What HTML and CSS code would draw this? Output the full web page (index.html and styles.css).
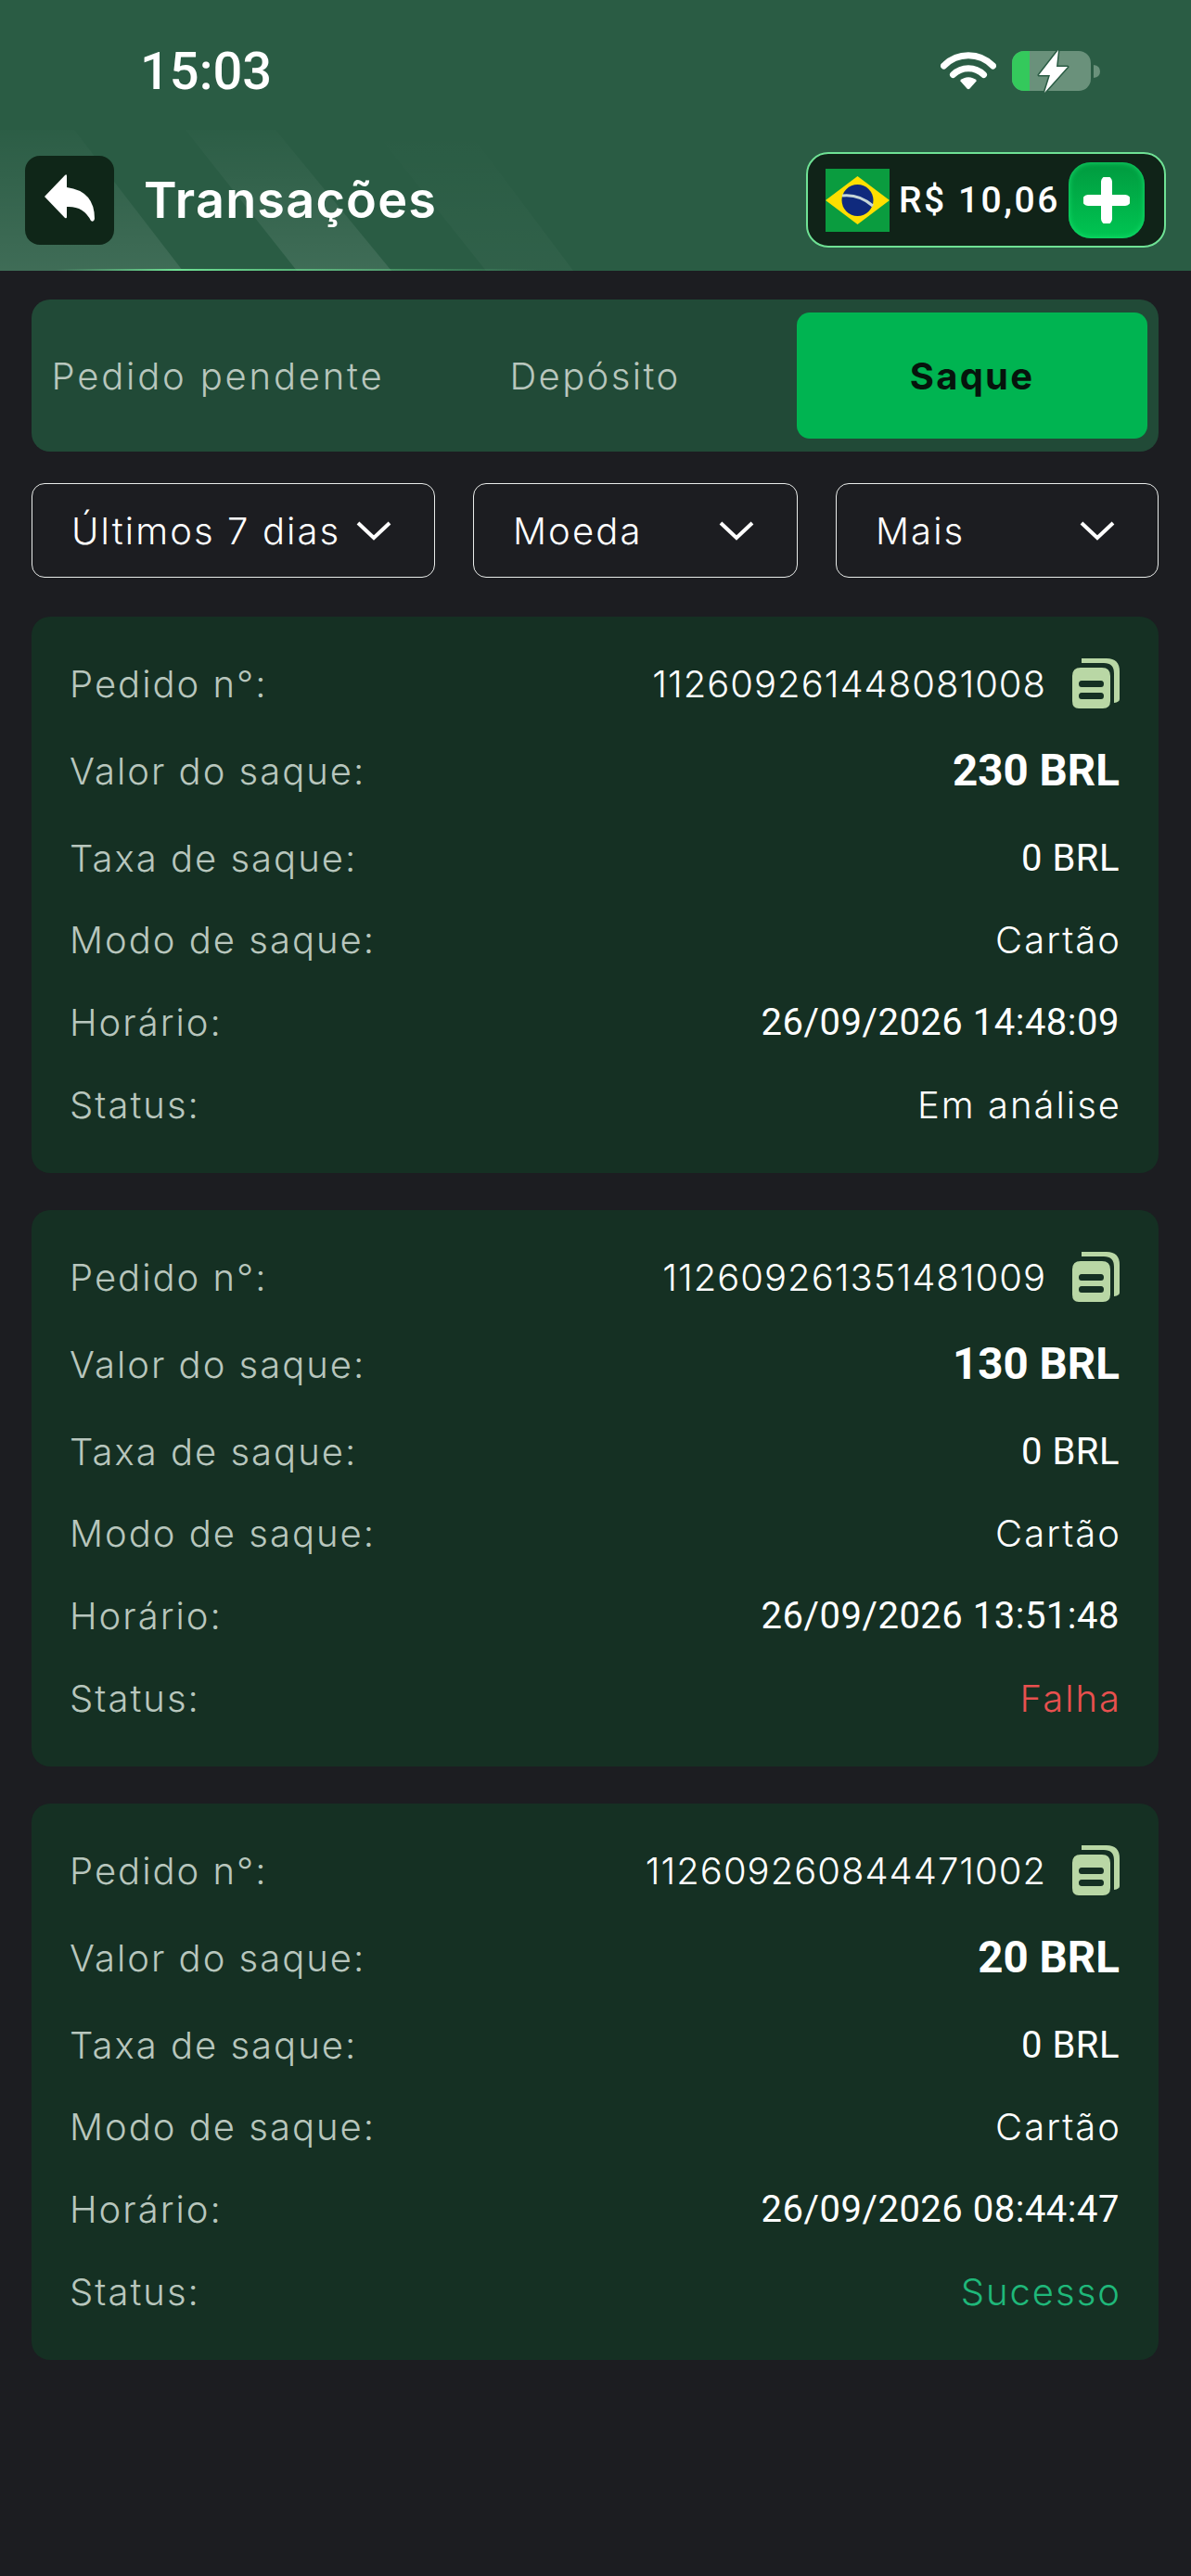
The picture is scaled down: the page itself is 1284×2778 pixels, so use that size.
FILE: index.html
```html
<!DOCTYPE html>
<html lang="pt-BR">
<head>
    <meta charset="UTF-8">
    <meta name="viewport" content="width=device-width, initial-scale=1.0">
    <title>Transações</title>
    <link rel="stylesheet" href="styles.css">
</head>
<body>

    <header class="topo">
        <svg class="listras" viewBox="0 0 640 152" preserveAspectRatio="none" aria-hidden="true">
            <defs>
                <linearGradient id="brilho" x1="0" y1="0" x2="0" y2="1">
                    <stop offset="0" stop-color="#fff" stop-opacity="0.01"/>
                    <stop offset="1" stop-color="#fff" stop-opacity="0.1"/>
                </linearGradient>
                <linearGradient id="brilhoFraco" x1="0" y1="0" x2="0" y2="1">
                    <stop offset="0" stop-color="#fff" stop-opacity="0"/>
                    <stop offset="1" stop-color="#fff" stop-opacity="0.03"/>
                </linearGradient>
            </defs>
            <polygon points="0,0 80,0 197,152 0,152" fill="url(#brilho)"/>
            <polygon points="200,0 297,0 422,152 320,152" fill="url(#brilho)"/>
            <polygon points="403,0 504,0 618,152 524,152" fill="url(#brilhoFraco)"/>
        </svg>

        <div class="status-bar">
            <span class="hora">15:03</span>
            <div class="status-icones">
                <svg class="wifi" width="60" height="44" viewBox="0 0 60 44" aria-hidden="true">
                    <path d="M3.5 18 C18 3 42 3 56.5 18" fill="none" stroke="#fff" stroke-width="7" stroke-linecap="round"/>
                    <path d="M13.5 27.5 C23 18.5 37 18.5 46.5 27.5" fill="none" stroke="#fff" stroke-width="7" stroke-linecap="round"/>
                    <path d="M21 34 C26 29 34 29 39 34 L31.500 42.500 Q30 44 28.500 42.500 Z" fill="#fff"/>
                </svg>
                <svg class="bateria" width="96" height="48" viewBox="0 0 96 48" aria-hidden="true">
                    <rect x="0" y="2" width="85" height="43" rx="13" fill="#6a917b"/>
                    <path d="M13 2 H19 V45 H13 A13 13 0 0 1 0 32 V15 A13 13 0 0 1 13 2 Z" fill="#34c95c"/>
                    <path d="M88 17 Q95 18 95 24 Q95 30 88 31 Z" fill="#6a917b"/>
                    <path d="M50 1 L29 28 H41 L35 47 L60 19 H48 Z" fill="#fff" stroke="#2a5c44" stroke-width="3" stroke-linejoin="round" paint-order="stroke"/>
                </svg>
            </div>
        </div>

        <div class="nav">
            <div class="nav-esq">
                <button class="voltar" type="button" aria-label="Voltar">
                    <svg width="96" height="96" viewBox="0 0 96 96" aria-hidden="true">
                        <path d="M43 21 L21 44 L43 67 Q45 68 45 66 V55 Q63 54 71 70 Q74 72 75 68 Q75 38 45 34 V22 Q45 19 43 21 Z" fill="#fff"/>
                    </svg>
                </button>
                <h1 class="titulo">Transações</h1>
            </div>
            <div class="saldo">
                <svg class="bandeira" width="69" height="68" viewBox="0 0 69 68" aria-hidden="true">
                    <rect width="69" height="68" fill="#0a9c3f"/>
                    <polygon points="34.500,8 69,34 34.500,60 0,34" fill="#fedf00"/>
                    <circle cx="34.500" cy="34" r="17" fill="#0f2a7d"/>
                    <path d="M18 29 Q36 27 51 40" fill="none" stroke="#c6d6d8" stroke-width="3"/>
                </svg>
                <span class="saldo-valor">R$ 10,06</span>
                <button class="somar" type="button" aria-label="Adicionar">
                    <svg width="50" height="50" viewBox="0 0 50 50" aria-hidden="true">
                        <path d="M25 5 V45 M5 25 H45" stroke="#fff" stroke-width="12" stroke-linecap="round"/>
                    </svg>
                </button>
            </div>
        </div>
    </header>

    <main class="conteudo">
        <div class="abas">
            <div class="aba aba-longa">Pedido pendente</div>
            <div class="aba">Depósito</div>
            <div class="aba aba-ativa">Saque</div>
        </div>

        <div class="filtros">
            <div class="filtro"><span>Últimos 7 dias</span><svg width="38" height="22" viewBox="0 0 38 22" aria-hidden="true"><path d="M2 3 L19 19 L36 3" fill="none" stroke="#fff" stroke-width="4"/></svg></div>
            <div class="filtro"><span>Moeda</span><svg width="38" height="22" viewBox="0 0 38 22" aria-hidden="true"><path d="M2 3 L19 19 L36 3" fill="none" stroke="#fff" stroke-width="4"/></svg></div>
            <div class="filtro"><span>Mais</span><svg width="38" height="22" viewBox="0 0 38 22" aria-hidden="true"><path d="M2 3 L19 19 L36 3" fill="none" stroke="#fff" stroke-width="4"/></svg></div>
        </div>

        <section class="cartao">
            <div class="linha linha-alta"><span class="rotulo">Pedido n°:</span><span class="valor-id">112609261448081008<svg class="copiar" width="52" height="54" viewBox="0 0 52 54" aria-hidden="true"><path d="M11 0 H38 Q52 0 52 14 V44 Q52 47 46 48 V16 Q46 5 35 5 H11 Q11 0 11 0 Z" fill="#b9d7a5"/><path fill-rule="evenodd" d="M10 10 H33 Q42 10 42 19 V46 Q42 54 34 54 H8 Q1 54 1 46 V19 Q1 10 10 10 Z M11 24 Q8 24 8 27.500 Q8 31 11 31 H32 Q35 31 35 27.500 Q35 24 32 24 Z M11 37 Q8 37 8 40.500 Q8 44 11 44 H32 Q35 44 35 40.500 Q35 37 32 37 Z" fill="#b9d7a5"/></svg></span></div>
            <div class="linha linha-alta"><span class="rotulo">Valor do saque:</span><span class="valor-forte">230 BRL</span></div>
            <div class="linha linha-alta linha-taxa"><span class="rotulo">Taxa de saque:</span><span class="valor-num">0 BRL</span></div>
            <div class="linha"><span class="rotulo">Modo de saque:</span><span class="valor">Cartão</span></div>
            <div class="linha"><span class="rotulo">Horário:</span><span class="valor-num">26/09/2026 14:48:09</span></div>
            <div class="linha"><span class="rotulo">Status:</span><span class="valor">Em análise</span></div>
        </section>

        <section class="cartao">
            <div class="linha linha-alta"><span class="rotulo">Pedido n°:</span><span class="valor-id">112609261351481009<svg class="copiar" width="52" height="54" viewBox="0 0 52 54" aria-hidden="true"><path d="M11 0 H38 Q52 0 52 14 V44 Q52 47 46 48 V16 Q46 5 35 5 H11 Q11 0 11 0 Z" fill="#b9d7a5"/><path fill-rule="evenodd" d="M10 10 H33 Q42 10 42 19 V46 Q42 54 34 54 H8 Q1 54 1 46 V19 Q1 10 10 10 Z M11 24 Q8 24 8 27.500 Q8 31 11 31 H32 Q35 31 35 27.500 Q35 24 32 24 Z M11 37 Q8 37 8 40.500 Q8 44 11 44 H32 Q35 44 35 40.500 Q35 37 32 37 Z" fill="#b9d7a5"/></svg></span></div>
            <div class="linha linha-alta"><span class="rotulo">Valor do saque:</span><span class="valor-forte">130 BRL</span></div>
            <div class="linha linha-alta linha-taxa"><span class="rotulo">Taxa de saque:</span><span class="valor-num">0 BRL</span></div>
            <div class="linha"><span class="rotulo">Modo de saque:</span><span class="valor">Cartão</span></div>
            <div class="linha"><span class="rotulo">Horário:</span><span class="valor-num">26/09/2026 13:51:48</span></div>
            <div class="linha"><span class="rotulo">Status:</span><span class="valor status-falha">Falha</span></div>
        </section>

        <section class="cartao">
            <div class="linha linha-alta"><span class="rotulo">Pedido n°:</span><span class="valor-id">112609260844471002<svg class="copiar" width="52" height="54" viewBox="0 0 52 54" aria-hidden="true"><path d="M11 0 H38 Q52 0 52 14 V44 Q52 47 46 48 V16 Q46 5 35 5 H11 Q11 0 11 0 Z" fill="#b9d7a5"/><path fill-rule="evenodd" d="M10 10 H33 Q42 10 42 19 V46 Q42 54 34 54 H8 Q1 54 1 46 V19 Q1 10 10 10 Z M11 24 Q8 24 8 27.500 Q8 31 11 31 H32 Q35 31 35 27.500 Q35 24 32 24 Z M11 37 Q8 37 8 40.500 Q8 44 11 44 H32 Q35 44 35 40.500 Q35 37 32 37 Z" fill="#b9d7a5"/></svg></span></div>
            <div class="linha linha-alta"><span class="rotulo">Valor do saque:</span><span class="valor-forte">20 BRL</span></div>
            <div class="linha linha-alta linha-taxa"><span class="rotulo">Taxa de saque:</span><span class="valor-num">0 BRL</span></div>
            <div class="linha"><span class="rotulo">Modo de saque:</span><span class="valor">Cartão</span></div>
            <div class="linha"><span class="rotulo">Horário:</span><span class="valor-num">26/09/2026 08:44:47</span></div>
            <div class="linha"><span class="rotulo">Status:</span><span class="valor status-sucesso">Sucesso</span></div>
        </section>
    </main>

</body>
</html>
```

FILE: styles.css
```css
body {
    background-color: #1c1d21;
    margin: 0;
    min-height: 2778px;
    font-family: Inter, "Noto Sans", sans-serif;
    font-weight: 300;
    color: #ffffff;
}

.topo {
    position: relative;
    height: 292px;
    background-color: #2a5c44;
    overflow: hidden;
}

/* faixa verde clara embaixo do topo */
.topo::after {
    content: "";
    position: absolute;
    left: 60px;
    bottom: 0;
    width: 520px;
    height: 2px;
    background: linear-gradient(90deg, rgba(111, 226, 149, 0), #6fe295 25%, rgba(111, 226, 149, 0));
}

.listras {
    position: absolute;
    left: 0;
    top: 140px;
    width: 640px;
    height: 152px;
}

.status-bar {
    position: relative;
    height: 140px;
    box-sizing: border-box;
    padding: 48px 97px 0 151px;
    display: flex;
    justify-content: space-between;
    align-items: flex-start;
}

.hora {
    font-family: Roboto, sans-serif;
    font-size: 56px;
    font-weight: 500;
    line-height: 58px;
}

.status-icones {
    display: flex;
    gap: 17px;
    padding-top: 5px;
}

.nav {
    position: relative;
    height: 152px;
    box-sizing: border-box;
    padding: 24px 27px 0;
    display: flex;
    justify-content: space-between;
    align-items: flex-start;
}

.nav-esq {
    display: flex;
    align-items: center;
    gap: 32px;
    padding-top: 4px;
}

.voltar {
    width: 96px;
    height: 96px;
    padding: 0;
    border: none;
    border-radius: 16px;
    background-color: #0f2618;
}

.voltar svg {
    display: block;
}

.titulo {
    margin: 0;
    font-size: 54px;
    font-weight: 600;
    letter-spacing: 1.2px;
    line-height: 60px;
}

.saldo {
    width: 388px;
    height: 103px;
    box-sizing: border-box;
    padding: 0 21px 0 19px;
    display: flex;
    align-items: center;
    border: 2px solid #6fe295;
    border-radius: 24px;
    background-color: #102318;
}

.bandeira {
    flex: none;
}

.saldo-valor {
    margin-left: 10px;
    font-family: Roboto, sans-serif;
    font-size: 39px;
    font-weight: 500;
    letter-spacing: 2.5px;
    white-space: nowrap;
}

.somar {
    flex: none;
    width: 82px;
    height: 82px;
    margin-left: auto;
    padding: 0;
    border: none;
    border-radius: 24px;
    background: linear-gradient(180deg, #019a3f, #00c552);
    box-shadow: inset 0 0 6px #17e271;
    display: flex;
    align-items: center;
    justify-content: center;
}

.conteudo {
    padding: 31px 35px 0 34px;
}

.abas {
    height: 164px;
    box-sizing: border-box;
    padding: 14px 12px;
    display: flex;
    justify-content: space-between;
    border-radius: 20px;
    background-color: #214a37;
}

.aba {
    width: 378px;
    display: flex;
    align-items: center;
    justify-content: center;
    border-radius: 14px;
    font-size: 40px;
    letter-spacing: 2.4px;
    color: #b8c6bd;
    white-space: nowrap;
}

.aba-longa {
    letter-spacing: 2.8px;
}

.aba-ativa {
    background-color: #00b451;
    color: #06140c;
    font-weight: 700;
    letter-spacing: 2.2px;
}

.filtros {
    margin-top: 34px;
    display: grid;
    grid-template-columns: 435px 350px 1fr;
    gap: 41px;
}

.filtro {
    height: 102px;
    box-sizing: border-box;
    padding: 0 46px 0 42px;
    display: flex;
    align-items: center;
    justify-content: space-between;
    border: 1.5px solid #e9ecea;
    border-radius: 14px;
    font-size: 40px;
    font-weight: 300;
    letter-spacing: 2.1px;
    white-space: nowrap;
}

.filtros + .cartao {
    margin-top: 42px;
}

.cartao {
    height: 600px;
    box-sizing: border-box;
    margin-top: 40px;
    padding: 25px 42px 0 41px;
    border-radius: 20px;
    background-color: #153023;
}

.linha {
    height: 89px;
    display: flex;
    align-items: center;
    justify-content: space-between;
    font-size: 40px;
}

.linha-alta {
    height: 94px;
}

.linha-taxa {
    margin-bottom: -3px;
}

.rotulo {
    color: #b8c6bd;
    letter-spacing: 2px;
}

.valor {
    letter-spacing: 2px;
    margin-right: -2px;
}

.valor-id {
    display: flex;
    align-items: center;
    gap: 27px;
    letter-spacing: 1px;
}

.valor-num {
    font-family: Roboto, sans-serif;
    font-weight: 400;
    letter-spacing: 0.5px;
}

.valor-forte {
    font-family: Roboto, sans-serif;
    font-size: 47.5px;
    font-weight: 700;
}

.status-falha {
    color: #e8504f;
}

.status-sucesso {
    color: #1fb87a;
}
```
